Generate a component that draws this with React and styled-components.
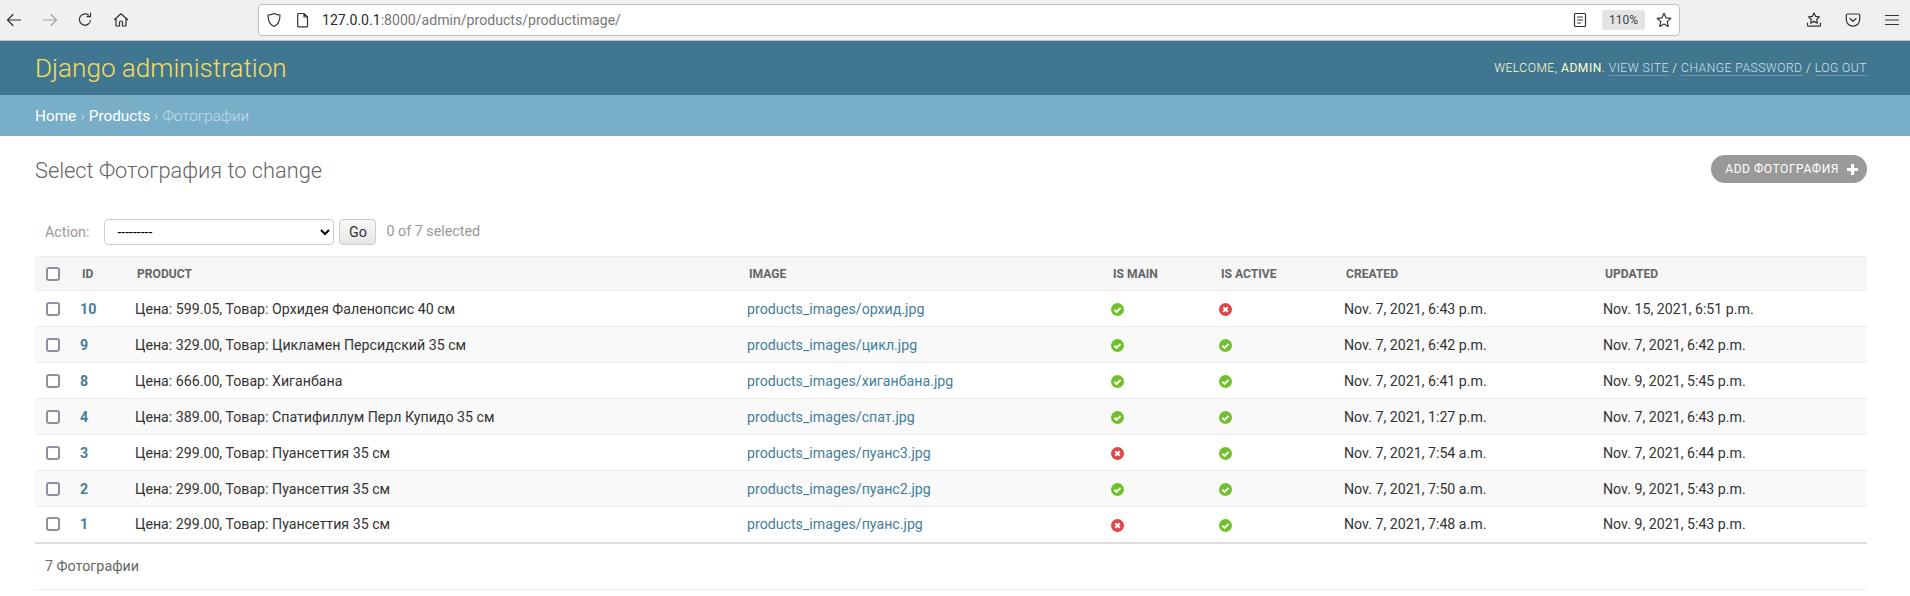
import React from "react";
import styled, { createGlobalStyle } from "styled-components";

const Global = createGlobalStyle`
  html, body { margin: 0; padding: 0; background: #fff; }
  body { font-family: Roboto, "Liberation Sans", sans-serif; font-size: 15.4px; color: #333; }
`;

const Chrome = styled.div`
  height: 40px; background: #f0f0f0; border-bottom: 1px solid #c4c4c4;
  display: flex; align-items: center; position: relative;
`;
const NavGroup = styled.div`display: flex; width: 258px; padding-left: 6px; box-sizing: border-box;`;
const NavBtn = styled.span`
  width: 35.7px; height: 20px; display: flex; align-items: center; color: ${p => p.$off ? "#a5a5a5" : "#333"};
`;
const UrlBar = styled.div`
  width: 1422px; height: 32px; background: #fff; border: 1px solid #c0c0c0; border-radius: 4px;
  display: flex; align-items: center; box-sizing: border-box; padding: 0 7px; color: #333;
`;
const IconGap = styled.span`width: 13px;`;
const UrlText = styled.span`font: 14.1px Roboto, sans-serif; margin-left: 11px; color: #2b2b2b; flex: 1;`;
const UrlMuted = styled.span`color: #777;`;
const Zoom = styled.span`
  width: 43px; height: 20px; background: #e4e4e4; border-radius: 3px; font-size: 12px; color: #444;
  display: flex; align-items: center; justify-content: center; margin: 0 11px 0 14px;
`;
const RightTools = styled.div`display: flex; margin-left: auto; gap: 23px; padding-right: 10px; color: #333;`;

const Header = styled.header`
  height: 54px; background: #417690; display: flex; align-items: center; justify-content: space-between;
  padding: 0 43px 0 35px;
`;
const Brand = styled.h1`margin: 0; font-weight: 300; font-size: 26.1px; color: #f5dd5d;`;
const UserTools = styled.div`
  font-size: 12.1px; font-weight: 300; letter-spacing: .5px; text-transform: uppercase; color: #ffc;
  & strong { font-weight: 400; }
`;
const UserLink = styled.a`border-bottom: 1px solid rgba(255,255,255,.25); color: #cfe0e8;`;
const Crumbs = styled.nav`
  height: 41px; box-sizing: border-box; background: #79aec8; padding: 1px 35px 0; display: flex; align-items: center;
  font-size: 15.3px; font-weight: 300; color: #c4dce8; gap: 4px;
`;
const Crumb = styled.a`color: #fff; font-weight: 400;`;

const Main = styled.main`padding: 19px 43px 0 35px;`;
const TitleRow = styled.div`display: flex; justify-content: space-between; align-items: flex-start; height: 28px;`;
const Title = styled.h2`margin: 2px 0 0; font-weight: 300; font-size: 21.8px; line-height: 28px; color: #666;`;
const AddBtn = styled.a`
  height: 28px; box-sizing: border-box; background: #999; color: #fff; border-radius: 15px; padding: 0 8px 0 14px;
  display: flex; align-items: center; gap: 7px; font-size: 12.1px; letter-spacing: .5px; text-transform: uppercase;
`;
const Actions = styled.div`
  display: flex; align-items: center; height: 26px; margin-top: 36px; padding-left: 10px; color: #999; font-size: 14.3px;
`;
const ActionSelect = styled.select`
  width: 230px; height: 26px; margin-left: 15px; border: 1px solid #ccc; border-radius: 4px; background: #fff;
  font: 14px Roboto, sans-serif; padding: 0 8px; box-sizing: border-box;
`;
const GoBtn = styled.button`
  width: 37px; height: 26px; margin-left: 5px; border: 1px solid #ccc; border-radius: 4px; background: linear-gradient(#f8f8f8,#e6e6e6);
  font: 14.3px Roboto, sans-serif; color: #333; padding: 0;
`;
const Count = styled.span`margin-left: 10px; position: relative; top: -1px;`;

const Table = styled.table`
  margin-top: 11px; width: 1832px; table-layout: fixed; border-collapse: collapse; border-bottom: 2px solid #ddd;
`;
const Th = styled.th`
  height: 34px; padding: 0 0 0 ${p => p.$pad}px; box-sizing: border-box; background: #f6f6f6; color: #666; text-align: left; font-size: 12.1px; font-weight: 700;
  text-transform: uppercase; border-top: 1px solid #eee; border-bottom: 1px solid #eee;
`;
const Row = styled.tr`background: ${p => p.$even ? "#f9f9f9" : "#fff"};`;
const Td = styled.td`
  height: 36px; padding: 0 0 0 ${p => p.$pad ?? 10}px; box-sizing: border-box; font-size: 14.2px; color: #333; border-bottom: 1px solid #eee;
`;
const IdLink = styled.a`color: #447e9b; font-weight: 700;`;
const FileLink = styled.a`color: #447e9b;`;
const Check = styled.input.attrs({ type: "checkbox" })`
  appearance: none; display: block; width: 14px; height: 14px; margin: 0; box-sizing: border-box;
  border: 2px solid #8f8f9d; border-radius: 3px; background: #fff;
`;
const StatusSvg = styled.svg`display: block; width: 13px; height: 13px; margin-top: 2px;`;
const Paginator = styled.p`
  margin: 0; height: 46px; line-height: 44px; box-sizing: border-box; padding-left: 10px; color: #666; font-size: 14.3px; border-bottom: 1px solid #eee;
`;

const Yes = () => (
  <StatusSvg viewBox="0 0 13 13">
    <circle cx="6.5" cy="6.5" r="6.5" fill="#70bf2b" />
    <path d="M3.4 6.7l2.2 2.2 4-4" fill="none" stroke="#fff" strokeWidth="2" />
  </StatusSvg>
);
const No = () => (
  <StatusSvg viewBox="0 0 13 13">
    <circle cx="6.5" cy="6.5" r="6.5" fill="#dd4646" />
    <path d="M4.2 4.2l4.6 4.6M8.8 4.2l-4.6 4.6" fill="none" stroke="#fff" strokeWidth="2" />
  </StatusSvg>
);
const Ico = ({ children, w = 16, h = 16 }) => (
  <svg width={w} height={h} viewBox="0 0 16 16" fill="none" stroke="currentColor" strokeWidth="1.2" strokeLinecap="round" strokeLinejoin="round">{children}</svg>
);

const rows = [
  ["10", "Цена: 599.05, Товар: Орхидея Фаленопсис 40 см", "орхид", 1, 0, "Nov. 7, 2021, 6:43 p.m.", "Nov. 15, 2021, 6:51 p.m."],
  ["9", "Цена: 329.00, Товар: Цикламен Персидский 35 см", "цикл", 1, 1, "Nov. 7, 2021, 6:42 p.m.", "Nov. 7, 2021, 6:42 p.m."],
  ["8", "Цена: 666.00, Товар: Хиганбана", "хиганбана", 1, 1, "Nov. 7, 2021, 6:41 p.m.", "Nov. 9, 2021, 5:45 p.m."],
  ["4", "Цена: 389.00, Товар: Спатифиллум Перл Купидо 35 см", "спат", 1, 1, "Nov. 7, 2021, 1:27 p.m.", "Nov. 7, 2021, 6:43 p.m."],
  ["3", "Цена: 299.00, Товар: Пуансеттия 35 см", "пуанс3", 0, 1, "Nov. 7, 2021, 7:54 a.m.", "Nov. 7, 2021, 6:44 p.m."],
  ["2", "Цена: 299.00, Товар: Пуансеттия 35 см", "пуанс2", 1, 1, "Nov. 7, 2021, 7:50 a.m.", "Nov. 9, 2021, 5:43 p.m."],
  ["1", "Цена: 299.00, Товар: Пуансеттия 35 см", "пуанс", 0, 1, "Nov. 7, 2021, 7:48 a.m.", "Nov. 9, 2021, 5:43 p.m."],
];
const widths = [35, 55, 612, 364, 108, 125, 259, 274];
const heads = ["ID", "Product", "Image", "Is main", "Is active", "Created", "Updated"];

export default function App() {
  return (
    <>
      <Global />
      <Chrome>
        <NavGroup>
          <NavBtn><Ico><path d="M14.5 8H1.5M7 2.5L1.5 8 7 13.5" /></Ico></NavBtn>
          <NavBtn $off><Ico><path d="M1.5 8h13M9 2.5L14.5 8 9 13.5" /></Ico></NavBtn>
          <NavBtn><Ico><path d="M13.5 8.500A5.600 5.600 0 1 1 11.500 3.200M13.500 1v3.600H10" /></Ico></NavBtn>
          <NavBtn><Ico><path d="M1.500 7.500L8 1.800l6.500 5.700M3 6.500V14h3.500v-3.500a1.500 1.500 0 0 1 3 0V14H13V6.500" /></Ico></NavBtn>
        </NavGroup>
        <UrlBar>
          <Ico><path d="M8 1.500c2 1 4 1.500 6 1.500 0 5-1 9.500-6 11.500C3 12.500 2 8 2 3c2 0 4-.5 6-1.500z" /></Ico>
          <IconGap />
          <Ico><path d="M3.500 1.500h5.500l3.500 3.500v9a.8.8 0 0 1-.8.8H3.500a.8.8 0 0 1-.8-.8V2.300a.8.8 0 0 1 .8-.8zM9 1.500V5h3.500" /></Ico>
          <UrlText>127.0.0.1<UrlMuted>:8000/admin/products/productimage/</UrlMuted></UrlText>
          <Ico><path d="M3.500 1.500h9a1 1 0 0 1 1 1v11a1 1 0 0 1-1 1h-9a1 1 0 0 1-1-1v-11a1 1 0 0 1 1-1zM5.500 5h5M5.500 8h5M5.500 11h3" /></Ico>
          <Zoom>110%</Zoom>
          <Ico><path d="M8 1.300l2 4.500 4.900.5-3.700 3.300 1.100 4.800L8 12l-4.300 2.400 1.100-4.800L1.100 6.300 6 5.800z" /></Ico>
        </UrlBar>
        <RightTools>
          <Ico><path d="M8 1l1.700 3.400 3.700.5-2.700 2.600.7 3.600L8 9.400l-3.400 1.700.7-3.600L2.600 4.900l3.700-.5zM1.500 11v2.200a1 1 0 0 0 1 1h11a1 1 0 0 0 1-1V11" /></Ico>
          <Ico><path d="M2.500 2h11A1.200 1.200 0 0 1 14.700 3.200v4.300a6.700 6.700 0 0 1-13.400 0V3.200A1.200 1.200 0 0 1 2.500 2zM5 6.500L8 9.300l3-2.800" /></Ico>
          <Ico><path d="M1.500 3.500h13M1.500 8h13M1.500 12.500h13" /></Ico>
        </RightTools>
      </Chrome>
      <Header>
        <Brand>Django administration</Brand>
        <UserTools>
          Welcome, <strong>admin</strong>. <UserLink>View site</UserLink> / <UserLink>Change password</UserLink> / <UserLink>Log out</UserLink>
        </UserTools>
      </Header>
      <Crumbs><Crumb>Home</Crumb> › <Crumb>Products</Crumb> › Фотографии</Crumbs>
      <Main>
        <TitleRow>
          <Title>Select Фотография to change</Title>
          <AddBtn>Add Фотография
            <svg width="13" height="13" viewBox="0 0 13 13"><path d="M6.500 1v11M1 6.500h11" stroke="#fff" strokeWidth="3.200" /></svg>
          </AddBtn>
        </TitleRow>
        <Actions>
          Action:
          <ActionSelect defaultValue="x"><option value="x">---------</option></ActionSelect>
          <GoBtn>Go</GoBtn>
          <Count>0 of 7 selected</Count>
        </Actions>
        <Table>
          <colgroup>{widths.map((w, i) => <col key={i} style={{ width: w }} />)}</colgroup>
          <thead>
            <tr>
              <Th $pad={11}><Check /></Th>
              {heads.map(h => <Th key={h} $pad={12}>{h}</Th>)}
            </tr>
          </thead>
          <tbody>
            {rows.map((r, i) => (
              <Row key={r[0]} $even={i % 2 === 1}>
                <Td $pad={11}><Check /></Td>
                <Td><IdLink>{r[0]}</IdLink></Td>
                <Td>{r[1]}</Td>
                <Td><FileLink>products_images/{r[2]}.jpg</FileLink></Td>
                <Td>{r[3] ? <Yes /> : <No />}</Td>
                <Td>{r[4] ? <Yes /> : <No />}</Td>
                <Td>{r[5]}</Td>
                <Td>{r[6]}</Td>
              </Row>
            ))}
          </tbody>
        </Table>
        <Paginator>7 Фотографии</Paginator>
      </Main>
    </>
  );
}
